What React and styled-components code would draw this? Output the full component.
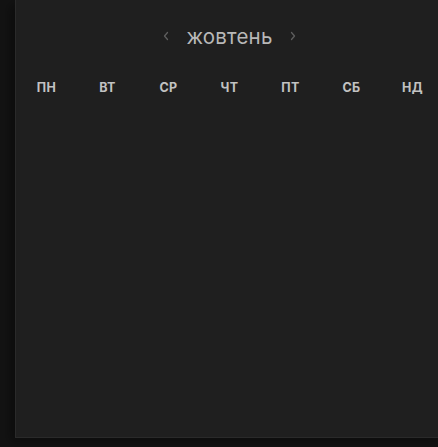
import React from "react";
import styled, { createGlobalStyle } from "styled-components";

const GlobalStyle = createGlobalStyle`
  html, body {
    margin: 0;
    padding: 0;
    background: #131313;
    overflow: hidden;
  }
  body {
    font-family: Inter, "Noto Sans", sans-serif;
  }
`;

const Page = styled.div`
  width: 438px;
  height: 447px;
  padding-left: 15px;
  box-sizing: border-box;
  overflow: hidden;
`;

const Panel = styled.div`
  width: 429px;
  height: 438px;
  box-sizing: border-box;
  background: #1f1f1f;
  border: 1px solid #2a2a2a;
  border-top: none;
  box-shadow: -5px 4px 10px rgba(0, 0, 0, 0.35);
  display: flex;
  flex-direction: column;
`;

const Header = styled.div`
  display: flex;
  align-items: center;
  justify-content: center;
  gap: 16px;
  height: 36px;
  margin-top: 18px;
  & > span {
    font-size: 20.5px;
    color: #b8b8b8;
    letter-spacing: 0.2px;
  }
`;

const Arrow = styled.button`
  border: none;
  background: none;
  padding: 0;
  display: flex;
  color: #5e5e5e;
  cursor: pointer;
`;

const Weekdays = styled.div`
  display: grid;
  grid-template-columns: repeat(7, 1fr);
  margin-top: 26px;
  & > div {
    text-align: center;
    font-size: 12.5px;
    font-weight: 700;
    color: #c2c2c2;
    letter-spacing: 0.4px;
  }
`;

const Chevron = ({ dir }) => (
  <svg width="8" height="12" viewBox="0 0 8 12" fill="none">
    <path
      d={dir === "left" ? "M5.5 2.5L2.5 6l3 3.5" : "M2.5 2.5l3 3.5-3 3.5"}
      stroke="currentColor"
      strokeWidth="1.3"
      strokeLinecap="round"
      strokeLinejoin="round"
    />
  </svg>
);

const days = ["ПН", "ВТ", "СР", "ЧТ", "ПТ", "СБ", "НД"];

const App = () => {
  return (
    <>
      <GlobalStyle />
      <Page>
        <Panel>
          <Header>
            <Arrow aria-label="prev">
              <Chevron dir="left" />
            </Arrow>
            <span>жовтень</span>
            <Arrow aria-label="next">
              <Chevron dir="right" />
            </Arrow>
          </Header>
          <Weekdays>
            {days.map((d) => (
              <div key={d}>{d}</div>
            ))}
          </Weekdays>
        </Panel>
      </Page>
    </>
  );
};

export default App;
